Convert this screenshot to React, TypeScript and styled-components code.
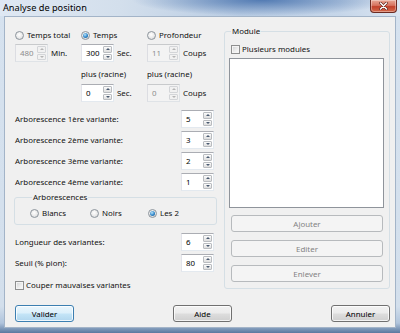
import React from "react";
import styled, { createGlobalStyle, css } from "styled-components";

const GlobalStyle = createGlobalStyle`
  html, body { margin: 0; padding: 0; }
  body {
    width: 400px; height: 333px; overflow: hidden;
    font-family: "Noto Sans", "Open Sans", sans-serif;
    font-size: 7.9px; color: #111;
    background: #9fb6d2;
  }
  * { box-sizing: border-box; }
`;

const Window = styled.div`
  width: 400px;
  height: 333px;
  display: flex;
  flex-direction: column;
  background: linear-gradient(180deg, #d6e2ef 0%, #d3dfec 92%, #b0c4dc 97%, #5a789f 100%);
`;

const TitleBar = styled.div`
  height: 16px;
  flex: none;
  display: flex;
  align-items: flex-start;
  padding: 0 3px 0 3px;
  background:
    radial-gradient(ellipse 130px 16px at 262px 0px, rgba(64, 108, 170, 0.85), rgba(64, 108, 170, 0)),
    linear-gradient(90deg, #dfe8f3 0%, #d3dfec 30%, #b9cce3 60%, #c6d6e9 85%, #dbe5f1 100%);
`;

const TitleText = styled.span`
  font-size: 9.2px;
  line-height: 15px;
  color: #000;
`;

const CloseButton = styled.div`
  margin-left: auto;
  width: 27px;
  height: 13px;
  border: 1px solid #6b2a22;
  border-top: none;
  border-radius: 0 0 4px 4px;
  background: linear-gradient(180deg, #e8a796 0%, #d7735f 45%, #c2402a 55%, #d46a4c 100%);
  box-shadow: inset 0 0 0 1px rgba(255, 255, 255, 0.35);
  display: flex;
  align-items: center;
  justify-content: center;
`;

const Frame = styled.div`
  flex: 1;
  display: flex;
  padding: 0 4px 5px 4px;
`;

const Client = styled.div`
  flex: 1;
  display: flex;
  flex-direction: column;
  background: #f0f0f0;
  border: 1px solid #a3b4c8;
  padding-bottom: 5px;
`;

const TopArea = styled.div`
  display: flex;
  align-items: flex-start;
  gap: 7px;
  padding: 8px 5px 0 9px;
`;

const LeftCol = styled.div`
  width: 203px;
  display: flex;
  flex-direction: column;
  padding-top: 4px;
`;

const TimeRow = styled.div<{ $mt: number; $h: number }>`
  display: grid;
  grid-template-columns: 66px 66px 1fr;
  align-items: center;
  height: ${(p) => p.$h}px;
  margin-top: ${(p) => p.$mt}px;
  padding-left: 1px;
`;

const Cell = styled.div`
  display: flex;
  align-items: center;
  gap: 3px;
  line-height: 12px;
  white-space: nowrap;
`;

const Option = styled.label`
  display: flex;
  align-items: center;
  gap: 3px;
  line-height: 12px;
  white-space: nowrap;
`;

const RadioCircle = styled.span<{ $checked?: boolean }>`
  width: 9px;
  height: 9px;
  flex: none;
  border-radius: 50%;
  border: 1px solid #8d959d;
  background: radial-gradient(circle at 45% 40%, #ffffff 0%, #e9e9e9 55%, #c9ced3 100%);
  display: inline-flex;
  align-items: center;
  justify-content: center;
  ${(p) =>
    p.$checked &&
    css`
      &::after {
        content: "";
        width: 5px;
        height: 5px;
        border-radius: 50%;
        background: radial-gradient(circle at 40% 35%, #b9e4fb 0%, #2f86c9 55%, #1a4e7e 100%);
      }
    `}
`;

const CheckSquare = styled.span`
  width: 9px;
  height: 9px;
  flex: none;
  border: 1px solid #8e8f8f;
  background: linear-gradient(135deg, #cfd0d2 0%, #eeeeee 60%, #fdfdfd 100%);
  box-shadow: inset 0 0 0 1px #f4f4f4;
`;

const SpinBox = styled.div<{ $disabled?: boolean }>`
  display: flex;
  width: 33px;
  height: 18px;
  flex: none;
  border: 1px solid;
  border-color: ${(p) => (p.$disabled ? "#c8cacc #dfe3e7 #dfe3e7 #dcdde2" : "#abadb3 #e3e9ef #e3e9ef #e2e3ea")};
  background: ${(p) => (p.$disabled ? "#f3f3f3" : "#ffffff")};
  padding: 1px;
`;

const SpinValue = styled.span<{ $disabled?: boolean }>`
  flex: 1;
  padding-left: 3px;
  line-height: 14px;
  color: ${(p) => (p.$disabled ? "#8d8d8d" : "#000")};
`;

const SpinButtons = styled.div`
  width: 9px;
  display: flex;
  flex-direction: column;
  gap: 1px;
`;

const SpinButton = styled.div<{ $disabled?: boolean }>`
  flex: 1;
  border: 1px solid ${(p) => (p.$disabled ? "#d3d5d8" : "#b9bcc0")};
  border-radius: 1px;
  background: ${(p) =>
    p.$disabled ? "#f1f1f1" : "linear-gradient(180deg, #fbfbfb 0%, #ececec 50%, #dedede 100%)"};
  display: flex;
  align-items: center;
  justify-content: center;
`;

const Arrow = styled.span<{ $up?: boolean; $disabled?: boolean }>`
  width: 0;
  height: 0;
  border-left: 2px solid transparent;
  border-right: 2px solid transparent;
  ${(p) =>
    p.$up
      ? css`border-bottom: 2px solid ${p.$disabled ? "#b5b5b5" : "#4a5a70"};`
      : css`border-top: 2px solid ${p.$disabled ? "#b5b5b5" : "#4a5a70"};`}
`;

const Unit = styled.span`
  line-height: 12px;
`;

const FieldRow = styled.div<{ $mt: number }>`
  display: flex;
  align-items: center;
  justify-content: space-between;
  height: 18px;
  margin-top: ${(p) => p.$mt}px;
  padding: 0 3px 0 1px;
  line-height: 12px;
  white-space: nowrap;
`;

const Group = styled.fieldset`
  margin: 0;
  border: 1px solid #d5dfe5;
  border-radius: 3px;
  min-width: 0;
`;

const SmallGroup = styled(Group)`
  padding: 4px 0 5px 15px;
`;

const ModuleGroup = styled(Group)`
  width: 166px;
  flex: none;
  padding: 6px 5px 6px 4px;
  display: flex;
  flex-direction: column;
`;

const Legend = styled.legend`
  padding: 0 1px;
  margin-left: 2px;
  line-height: 12px;
`;

const RadioLine = styled.div`
  display: grid;
  grid-template-columns: 60px 58px auto;
  height: 12px;
  align-items: center;
`;

const CheckLine = styled.div<{ $mt: number; $ml: number }>`
  display: flex;
  align-items: center;
  gap: 2px;
  height: 12px;
  margin-top: ${(p) => p.$mt}px;
  margin-left: ${(p) => p.$ml}px;
  line-height: 12px;
  white-space: nowrap;
`;

const ListBox = styled.div`
  height: 150px;
  margin-top: 3px;
  background: #fff;
  border: 1px solid #8f949b;
`;

const Button = styled.div<{ $variant?: "default" | "disabled" }>`
  height: 17px;
  border-radius: 3px;
  display: flex;
  align-items: center;
  justify-content: center;
  line-height: 12px;
  border: 1px solid #707070;
  background: linear-gradient(180deg, #f2f2f2 0%, #ebebeb 48%, #dddddd 52%, #cfcfcf 100%);
  box-shadow: inset 0 0 0 1px rgba(255, 255, 255, 0.75);
  color: #000;
  ${(p) =>
    p.$variant === "default" &&
    css`
      border-color: #3c7fb1;
      background: linear-gradient(180deg, #eaf6fd 0%, #dcf0fb 48%, #c4e5f7 52%, #b1d6ee 100%);
      box-shadow: inset 0 0 0 1px rgba(255, 255, 255, 0.8);
    `}
  ${(p) =>
    p.$variant === "disabled" &&
    css`
      border-color: #b7babd;
      background: #f4f4f4;
      box-shadow: none;
      color: #838383;
    `}
`;

const SideButton = styled(Button)<{ $mt: number }>`
  margin: ${(p) => p.$mt}px 1px 0 2px;
`;

const ButtonBar = styled.div`
  margin-top: auto;
  display: flex;
  justify-content: space-between;
  padding: 0 5px 0 10px;
`;

const DialogButton = styled(Button)`
  width: 59px;
`;

function Spinner({ value, disabled }: { value: string; disabled?: boolean }) {
  return (
    <SpinBox $disabled={disabled}>
      <SpinValue $disabled={disabled}>{value}</SpinValue>
      <SpinButtons>
        <SpinButton $disabled={disabled}>
          <Arrow $up $disabled={disabled} />
        </SpinButton>
        <SpinButton $disabled={disabled}>
          <Arrow $disabled={disabled} />
        </SpinButton>
      </SpinButtons>
    </SpinBox>
  );
}

function Radio({ label, checked }: { label: string; checked?: boolean }) {
  return (
    <Option>
      <RadioCircle $checked={checked} />
      <span>{label}</span>
    </Option>
  );
}

export default function App() {
  const arbo = [
    { label: "Arborescence 1ère variante:", value: "5" },
    { label: "Arborescence 2ème variante:", value: "3" },
    { label: "Arborescence 3ème variante:", value: "2" },
    { label: "Arborescence 4ème variante:", value: "1" },
  ];
  return (
    <>
      <GlobalStyle />
      <Window>
        <TitleBar>
          <TitleText>Analyse de position</TitleText>
          <CloseButton>
            <svg width="9" height="8" viewBox="0 0 9 8">
              <path d="M1.5 1 L7.5 7 M7.5 1 L1.5 7" stroke="#5a1c14" strokeWidth="2.6" strokeLinecap="round" />
              <path d="M1.5 1 L7.5 7 M7.5 1 L1.5 7" stroke="#ffffff" strokeWidth="1.5" strokeLinecap="round" />
            </svg>
          </CloseButton>
        </TitleBar>
        <Frame>
          <Client>
            <TopArea>
              <LeftCol>
                <TimeRow $mt={0} $h={12}>
                  <Radio label="Temps total" />
                  <Radio label="Temps" checked />
                  <Radio label="Profondeur" />
                </TimeRow>
                <TimeRow $mt={3} $h={18}>
                  <Cell>
                    <Spinner value="480" disabled />
                    <Unit>Min.</Unit>
                  </Cell>
                  <Cell>
                    <Spinner value="300" />
                    <Unit>Sec.</Unit>
                  </Cell>
                  <Cell>
                    <Spinner value="11" disabled />
                    <Unit>Coups</Unit>
                  </Cell>
                </TimeRow>
                <TimeRow $mt={6} $h={12}>
                  <span />
                  <Cell>plus (racine)</Cell>
                  <Cell>plus (racine)</Cell>
                </TimeRow>
                <TimeRow $mt={4} $h={18}>
                  <span />
                  <Cell>
                    <Spinner value="0" />
                    <Unit>Sec.</Unit>
                  </Cell>
                  <Cell>
                    <Spinner value="0" disabled />
                    <Unit>Coups</Unit>
                  </Cell>
                </TimeRow>
                {arbo.map((r, i) => (
                  <FieldRow key={r.label} $mt={i === 0 ? 8 : 3}>
                    <span>{r.label}</span>
                    <Spinner value={r.value} />
                  </FieldRow>
                ))}
                <SmallGroup>
                  <Legend>Arborescences</Legend>
                  <RadioLine>
                    <Radio label="Blancs" />
                    <Radio label="Noirs" />
                    <Radio label="Les 2" checked />
                  </RadioLine>
                </SmallGroup>
                <FieldRow $mt={8}>
                  <span>Longueur des variantes:</span>
                  <Spinner value="6" />
                </FieldRow>
                <FieldRow $mt={3}>
                  <span>Seuil (% pion):</span>
                  <Spinner value="80" />
                </FieldRow>
                <CheckLine $mt={7} $ml={1}>
                  <CheckSquare />
                  <span>Couper mauvaises variantes</span>
                </CheckLine>
              </LeftCol>
              <ModuleGroup>
                <Legend>Module</Legend>
                <CheckLine $mt={0} $ml={2}>
                  <CheckSquare />
                  <span>Plusieurs modules</span>
                </CheckLine>
                <ListBox />
                <SideButton $variant="disabled" $mt={7}>Ajouter</SideButton>
                <SideButton $variant="disabled" $mt={8}>Editer</SideButton>
                <SideButton $variant="disabled" $mt={8}>Enlever</SideButton>
              </ModuleGroup>
            </TopArea>
            <ButtonBar>
              <DialogButton $variant="default">Valider</DialogButton>
              <DialogButton>Aide</DialogButton>
              <DialogButton>Annuler</DialogButton>
            </ButtonBar>
          </Client>
        </Frame>
      </Window>
    </>
  );
}
